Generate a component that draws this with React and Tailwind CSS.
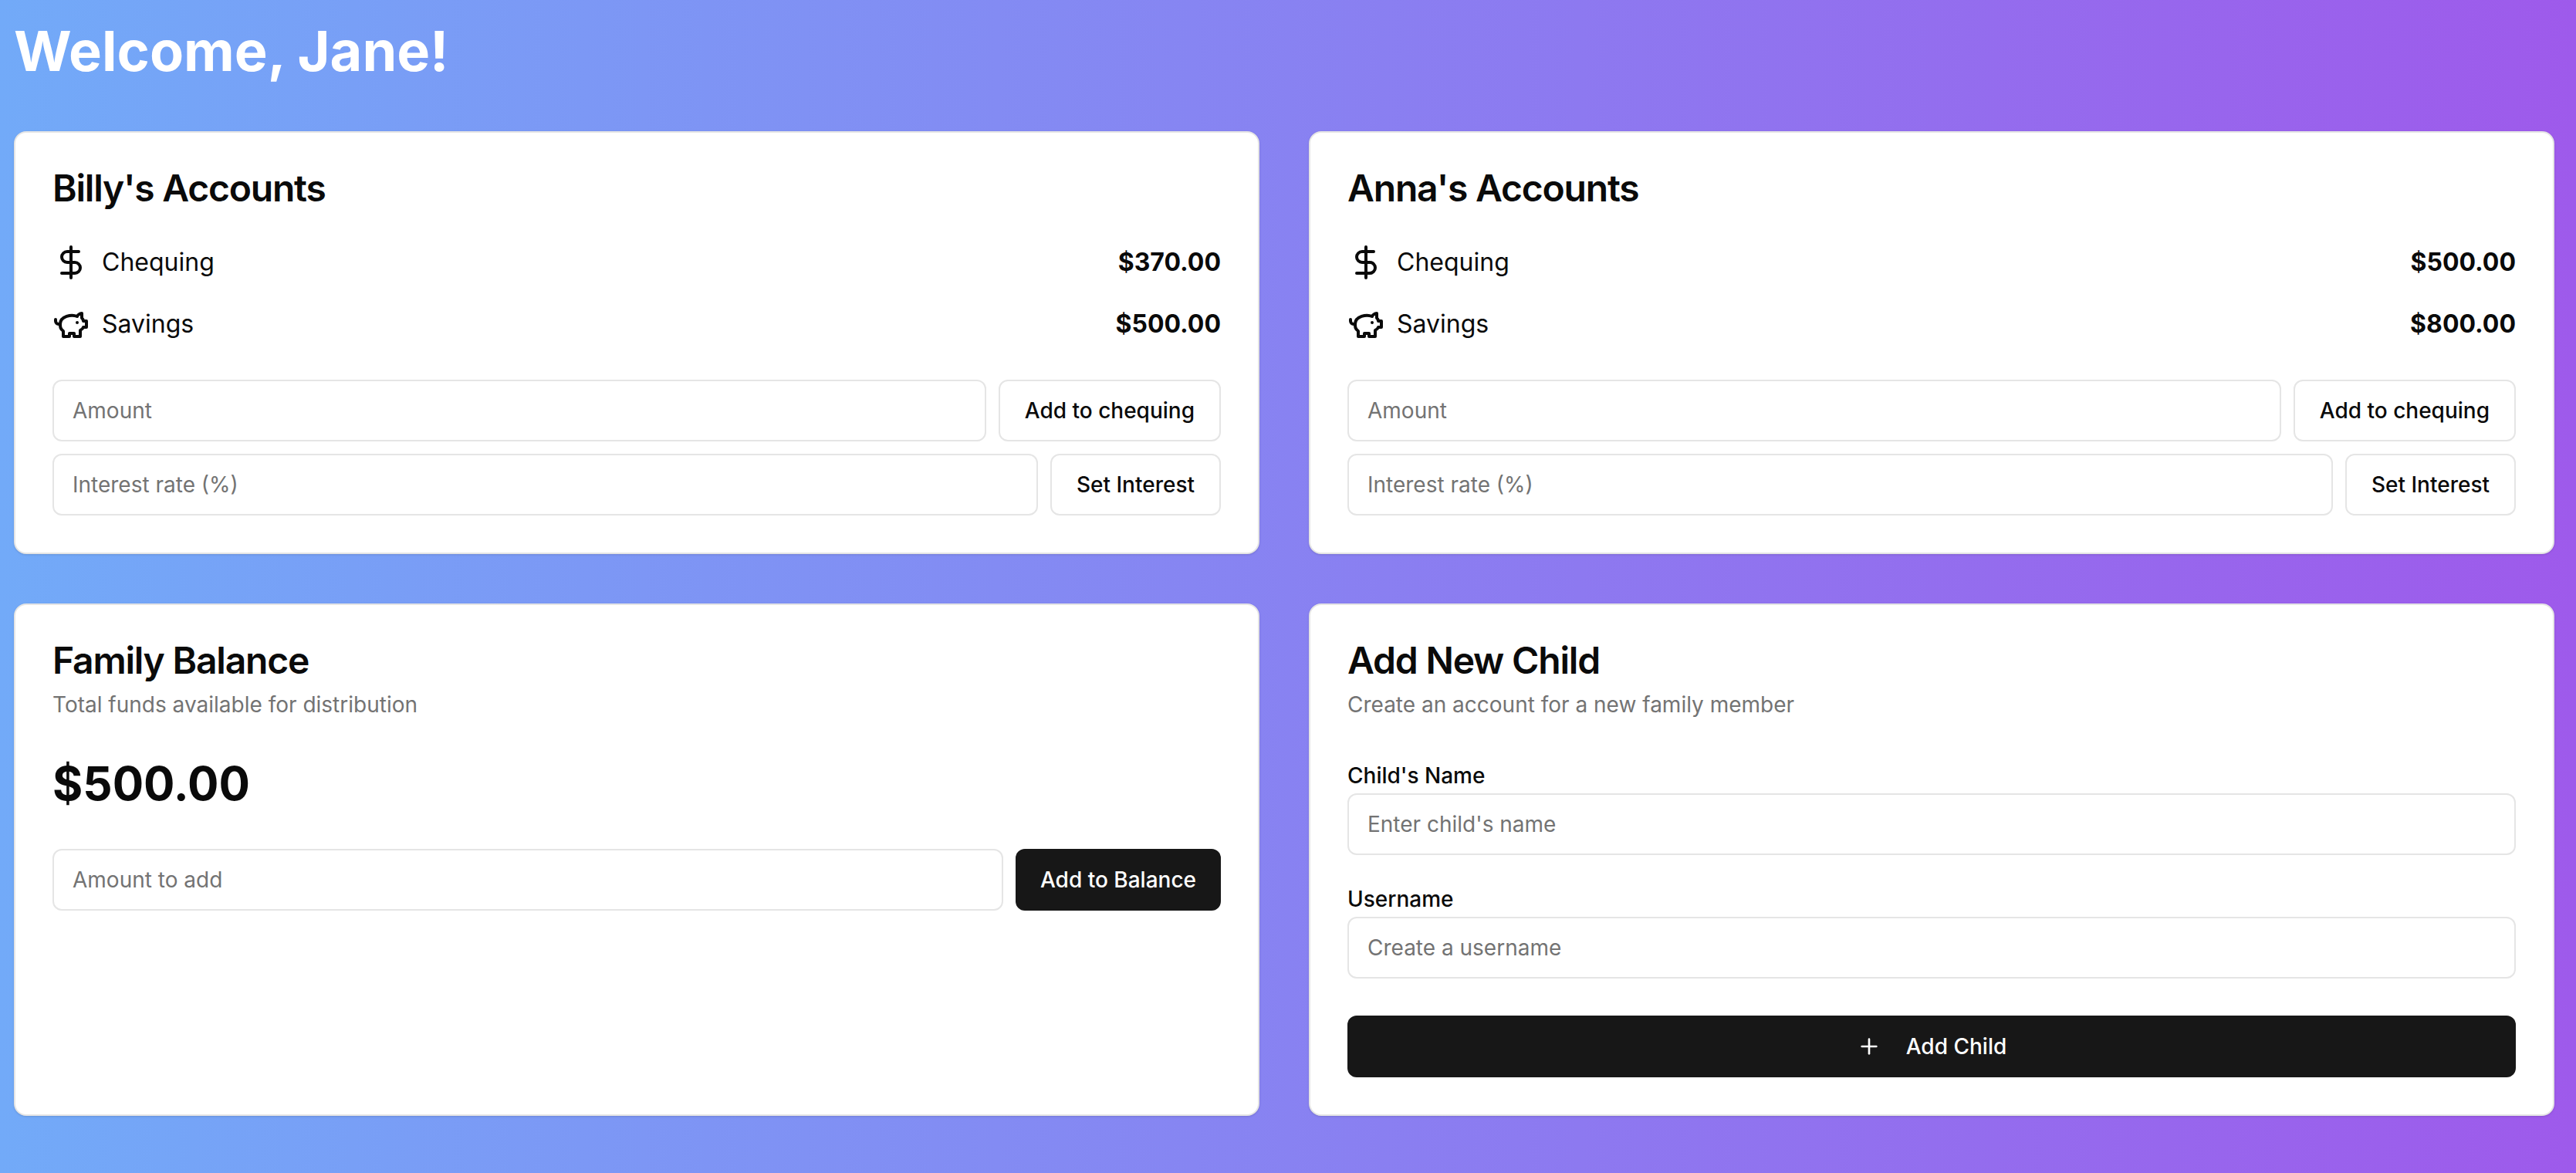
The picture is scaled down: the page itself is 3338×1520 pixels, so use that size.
import { DollarSign, Plus } from 'lucide-react'

function PiggyIcon() {
  return (
    <svg width="48" height="48" viewBox="0 0 24 24" fill="none" stroke="currentColor" strokeWidth="2" strokeLinecap="round" strokeLinejoin="round">
      <path d="M19 5c-1.5 0-2.8 1.4-3 2-3.5-1.5-11-.3-11 5 0 1.8 0 3 2 4.5V20h4v-2h3v2h4v-4c1-.5 1.7-1 2-2h2v-4h-2c0-1-.5-1.5-1-2V5z" />
      <path d="M2 9v1c0 1.1.9 2 2 2h1" />
      <path d="M16 11h.01" />
    </svg>
  )
}

function Field({ placeholder, className = '' }) {
  return (
    <input
      placeholder={placeholder}
      className={`h-20 min-w-0 rounded-xl border-2 border-[#e5e5e5] bg-white px-6 text-[28px] text-[#0a0a0a] placeholder:text-[#737373] outline-none ${className}`}
    />
  )
}

function OutlineButton({ children }) {
  return (
    <button className="h-20 shrink-0 rounded-xl border-2 border-[#e5e5e5] bg-white px-8 text-[28px] font-medium text-[#0a0a0a]">
      {children}
    </button>
  )
}

function AccountRow({ icon, label, amount }) {
  return (
    <div className="flex h-12 items-center justify-between">
      <div className="flex items-center gap-4">
        {icon}
        <span className="text-[32px]">{label}</span>
      </div>
      <span className="text-[32px] font-bold">{amount}</span>
    </div>
  )
}

function ChildCard({ name, chequing, savings }) {
  return (
    <div className="rounded-2xl border-2 border-[#e5e5e5] bg-white p-12 shadow-sm">
      <h2 className="text-[48px] leading-[48px] font-semibold tracking-[-1.2px]">{name}'s Accounts</h2>
      <div className="mt-12 flex flex-col gap-8">
        <AccountRow icon={<DollarSign size={48} />} label="Chequing" amount={chequing} />
        <AccountRow icon={<PiggyIcon />} label="Savings" amount={savings} />
      </div>
      <div className="mt-12 flex flex-col gap-4">
        <div className="flex gap-4">
          <Field placeholder="Amount" className="flex-1" />
          <OutlineButton>Add to chequing</OutlineButton>
        </div>
        <div className="flex gap-4">
          <Field placeholder="Interest rate (%)" className="flex-1" />
          <OutlineButton>Set Interest</OutlineButton>
        </div>
      </div>
    </div>
  )
}

function CardHeader({ title, subtitle }) {
  return (
    <div>
      <h2 className="text-[48px] leading-[48px] font-semibold tracking-[-1.2px]">{title}</h2>
      <p className="mt-[13px] text-[28px] leading-10 text-[#737373]">{subtitle}</p>
    </div>
  )
}

export default function App() {
  return (
    <div className="h-[1520px] overflow-hidden bg-linear-to-r/srgb from-[#72aaf8] to-[#9e5aeb] pl-[18px] pr-[28px] font-['Inter',sans-serif] text-[#0a0a0a]">
      <h1 className="h-[170px] pt-[26px] text-[72px] leading-[80px] font-bold text-white">Welcome, Jane!</h1>
      <div className="grid grid-cols-2 gap-16">
        <ChildCard name="Billy" chequing="$370.00" savings="$500.00" />
        <ChildCard name="Anna" chequing="$500.00" savings="$800.00" />

        <div className="rounded-2xl border-2 border-[#e5e5e5] bg-white p-12 shadow-sm">
          <CardHeader title="Family Balance" subtitle="Total funds available for distribution" />
          <div className="mt-[46px] text-[60px] leading-[72px] font-bold">$500.00</div>
          <div className="mt-[49px] flex gap-4">
            <Field placeholder="Amount to add" className="flex-1" />
            <button className="h-20 shrink-0 rounded-xl bg-[#171717] px-8 text-[28px] font-medium text-white">
              Add to Balance
            </button>
          </div>
        </div>

        <div className="rounded-2xl border-2 border-[#e5e5e5] bg-white p-12 shadow-sm">
          <CardHeader title="Add New Child" subtitle="Create an account for a new family member" />
          <div className="mt-[58px] flex flex-col gap-[43px]">
            <div>
              <label className="block text-[28px] leading-[28px] font-medium">Child's Name</label>
              <Field placeholder="Enter child's name" className="mt-[9px] w-full" />
            </div>
            <div>
              <label className="block text-[28px] leading-[28px] font-medium">Username</label>
              <Field placeholder="Create a username" className="mt-[9px] w-full" />
            </div>
          </div>
          <button className="mt-12 flex h-20 w-full items-center justify-center gap-8 rounded-xl bg-[#171717] text-[28px] font-medium text-white">
            <Plus size={32} />
            Add Child
          </button>
        </div>
      </div>
    </div>
  )
}
